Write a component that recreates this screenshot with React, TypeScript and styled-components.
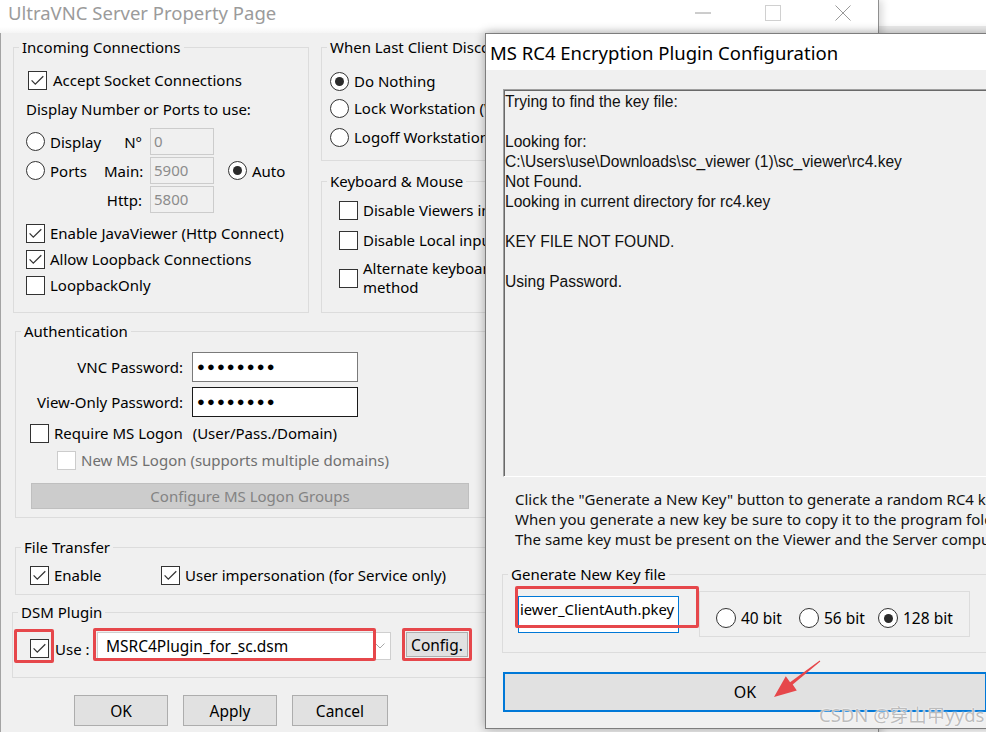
import React from "react";
import styled, { createGlobalStyle } from "styled-components";

const UI = `"Noto Sans", "Open Sans", sans-serif`;
const CLASSIC = `"Liberation Sans", Arial, sans-serif`;

const GlobalStyle = createGlobalStyle`
  html, body { margin: 0; padding: 0; background: #fff; }
  body { font-family: ${UI}; color: #000; }
  *, *::before, *::after { box-sizing: border-box; }
`;

const Desktop = styled.div`
  position: relative;
  width: 986px;
  height: 732px;
  overflow: hidden;
  font-family: ${UI};
  background: linear-gradient(#fff 0 26px, #ececec 26px 33px, #8c8c8c 33px 34px, #fff 34px);
`;

/* ---------- main window ---------- */
const MainWindow = styled.section`
  position: absolute;
  left: 0;
  top: 0;
  width: 879px;
  height: 760px;
  display: flex;
  flex-direction: column;
  background: #f0f0f0;
  border-right: 1px solid #8f8f8f;
  box-shadow: 3px 0 8px rgba(0, 0, 0, 0.16);
`;

const TitleBar = styled.header`
  flex: none;
  height: 33px;
  padding-bottom: 8px;
  display: flex;
  align-items: center;
  background: linear-gradient(#fff 0 27px, #f5f5f5 33px);
`;

const MainTitle = styled.h1`
  margin: 0;
  padding-left: 8px;
  font-size: 18.5px;
  font-weight: 400;
  line-height: 25px;
  color: #9b9b9b;
  white-space: nowrap;
`;

const WindowControls = styled.div`
  margin-left: auto;
  display: flex;
  height: 25px;
`;

const ControlButton = styled.div`
  width: 70px;
  height: 25px;
  display: flex;
  align-items: center;
  justify-content: center;
`;

const MainBody = styled.div`
  flex: 1;
  min-height: 0;
  border-left: 1px solid #a3a3a3;
  padding: 4px 12px 0 12px;
  display: flex;
  flex-direction: column;
`;

const TopRow = styled.div`
  display: flex;
  gap: 12px;
  align-items: flex-start;
`;

const RightColumn = styled.div`
  flex: 1;
  min-width: 0;
  display: flex;
  flex-direction: column;
  gap: 10px;
`;

const Group = styled.fieldset<{ $h: number; $w?: number; $mt?: number; $ml?: number }>`
  margin: ${(p) => p.$mt ?? 0}px 0 0 ${(p) => p.$ml ?? 0}px;
  padding: 0;
  height: ${(p) => p.$h}px;
  ${(p) => (p.$w ? `width: ${p.$w}px; flex: none;` : "")}
  min-width: 0;
  border: 1px solid #dcdcdc;
`;

const Legend = styled.legend`
  margin-left: 5px;
  padding: 0 3px;
  font-size: 15px;
  line-height: 20px;
  white-space: nowrap;
`;

const GroupBody = styled.div<{ $pl: number }>`
  display: flex;
  flex-direction: column;
  align-items: flex-start;
  padding-left: ${(p) => p.$pl}px;
`;

const Row = styled.div<{ $mt?: number; $ml?: number; $gap?: number }>`
  display: flex;
  align-items: center;
  min-height: 20px;
  gap: ${(p) => p.$gap ?? 5}px;
  margin-top: ${(p) => p.$mt ?? 0}px;
  margin-left: ${(p) => p.$ml ?? 0}px;
  font-size: 15px;
  line-height: 20px;
  white-space: nowrap;
`;

const Label = styled.span<{ $dim?: boolean; $w?: number; $mt?: number; $ml?: number }>`
  color: ${(p) => (p.$dim ? "#6f6f6f" : "#000")};
  ${(p) => (p.$w ? `width: ${p.$w}px; flex: none;` : "")}
  margin-top: ${(p) => p.$mt ?? 0}px;
  margin-left: ${(p) => p.$ml ?? 0}px;
  font-size: 15px;
  line-height: 20px;
  white-space: nowrap;
`;

const TwoLine = styled.span`
  font-size: 15px;
  line-height: 19px;
`;

const Box = styled.span<{ $disabled?: boolean }>`
  flex: none;
  width: 19px;
  height: 19px;
  border: 1px solid ${(p) => (p.$disabled ? "#cccccc" : "#333")};
  background: #fff;
  display: inline-flex;
  align-items: center;
  justify-content: center;
`;

const RadioCircle = styled.span<{ $on?: boolean; $size?: number }>`
  flex: none;
  width: ${(p) => p.$size ?? 19}px;
  height: ${(p) => p.$size ?? 19}px;
  border-radius: 50%;
  border: 1px solid #333;
  background: #fff;
  display: inline-flex;
  align-items: center;
  justify-content: center;
  &::after {
    content: "";
    width: 9px;
    height: 9px;
    border-radius: 50%;
    background: #2b2b2b;
    display: ${(p) => (p.$on ? "block" : "none")};
  }
`;

const CheckBox = ({ checked, disabled }: { checked?: boolean; disabled?: boolean }) => (
  <Box $disabled={disabled}>
    {checked && (
      <svg width="17" height="17" viewBox="0 0 17 17">
        <path d="M2.6 8.4 L6.3 12.2 L14.3 4.2" fill="none" stroke="#333" strokeWidth="1.25" />
      </svg>
    )}
  </Box>
);

const PortGrid = styled.div`
  margin-top: 9px;
  display: grid;
  grid-template-columns: 70px 38px 64px auto;
  grid-auto-rows: 27px;
  column-gap: 8px;
  row-gap: 2px;
  align-items: center;
  font-size: 15px;
  line-height: 20px;
`;

const RadioItem = styled.span<{ $ml?: number; $w?: number }>`
  display: flex;
  align-items: center;
  gap: 5px;
  margin-left: ${(p) => p.$ml ?? 0}px;
  ${(p) => (p.$w ? `width: ${p.$w}px; flex: none;` : "")}
  white-space: nowrap;
`;

const GridLabel = styled.span`
  text-align: right;
  white-space: nowrap;
`;

const PortInput = styled.div`
  height: 27px;
  width: 64px;
  border: 1px solid #cccccc;
  background: #f0f0f0;
  color: #8c8c8c;
  padding: 2px 0 0 3px;
  font-size: 15px;
  line-height: 20px;
`;

const PassGrid = styled.div`
  margin-top: 11px;
  display: grid;
  grid-template-columns: 167px 166px;
  grid-auto-rows: 30px;
  column-gap: 9px;
  row-gap: 5px;
  align-items: center;
  font-size: 15px;
  line-height: 20px;
`;

const PassInput = styled.div<{ $focus?: boolean }>`
  height: 30px;
  border: 1px solid ${(p) => (p.$focus ? "#1a1a1a" : "#7a7a7a")};
  background: #fff;
  padding-left: 4px;
  display: flex;
  align-items: center;
  font-family: ${CLASSIC};
  font-size: 13px;
  letter-spacing: 2.1px;
  color: #000;
`;

const WideDisabledButton = styled.div`
  margin: 13px 0 0 15px;
  width: 438px;
  height: 26px;
  background: #cccccc;
  border: 1px solid #bfbfbf;
  color: #838383;
  font-size: 15px;
  display: flex;
  align-items: center;
  justify-content: center;
`;

const WinButton = styled.div<{ $w: number; $h: number; $size?: number }>`
  flex: none;
  width: ${(p) => p.$w}px;
  height: ${(p) => p.$h}px;
  background: #e1e1e1;
  border: 1px solid #adadad;
  font-size: ${(p) => p.$size ?? 15.5}px;
  display: flex;
  align-items: center;
  justify-content: center;
  white-space: nowrap;
`;

const Marked = styled.div<{ $mt?: number; $ml?: number }>`
  position: relative;
  flex: none;
  display: flex;
  margin-top: ${(p) => p.$mt ?? 0}px;
  margin-left: ${(p) => p.$ml ?? 0}px;
`;

const Highlight = styled.span<{ $t: number; $r: number; $b: number; $l: number }>`
  position: absolute;
  top: ${(p) => p.$t}px;
  right: ${(p) => p.$r}px;
  bottom: ${(p) => p.$b}px;
  left: ${(p) => p.$l}px;
  border: 3px solid #e6474b;
  border-radius: 2px;
  pointer-events: none;
`;

const DsmRow = styled.div`
  margin-top: 9px;
  display: flex;
  align-items: flex-start;
  font-size: 15px;
  line-height: 20px;
`;

const Combo = styled.div`
  width: 294px;
  height: 28px;
  border: 1px solid #cfcfcf;
  background: #fff;
  display: flex;
  align-items: center;
  padding: 0 5px 0 8px;
  font-size: 15.5px;
  white-space: nowrap;
`;

const ComboText = styled.span`
  flex: 1;
`;

const ButtonRow = styled.div`
  margin: 17px 0 0 61px;
  display: flex;
  gap: 15px;
`;

/* ---------- dialog ---------- */
const Dialog = styled.section`
  position: absolute;
  left: 485px;
  top: 33px;
  width: 520px;
  height: 696px;
  background: #f0f0f0;
  border: 1px solid #7d7d7d;
  box-shadow: 0 0 10px rgba(0, 0, 0, 0.33);
  display: flex;
  flex-direction: column;
`;

const DialogTitle = styled.header`
  flex: none;
  height: 36px;
  background: #fff;
  padding-left: 4px;
  display: flex;
  align-items: center;
  font-size: 18.5px;
  color: #000;
  white-space: nowrap;
`;

const DialogBody = styled.div`
  padding: 0 17px;
  display: flex;
  flex-direction: column;
`;

const LogBox = styled.div`
  margin-top: 19px;
  height: 388px;
  border: 1px solid;
  border-color: #a0a0a0 #ffffff #ffffff #a0a0a0;
  box-shadow: inset 1px 1px 0 #696969;
  padding: 2px 1px;
  font-family: ${CLASSIC};
  font-size: 15.6px;
  line-height: 20px;
  white-space: pre;
  overflow: hidden;
  color: #111;
`;

const HelpText = styled.p`
  margin: 12px 0 0;
  padding-left: 12px;
  font-size: 15px;
  line-height: 20px;
  white-space: pre;
  color: #111;
`;

const KeyRow = styled.div`
  display: flex;
  align-items: flex-start;
  padding-left: 15px;
  font-size: 15px;
  line-height: 20px;
`;

const KeyInput = styled.div`
  width: 161px;
  height: 37px;
  border: 1px solid #0078d7;
  background: #fff;
  padding: 2px 0 0 1px;
  font-size: 14.8px;
  line-height: 20px;
  white-space: nowrap;
  overflow: hidden;
`;

const BitFrame = styled.div`
  margin: 7px 0 0 20px;
  width: 271px;
  height: 46px;
  border: 1px solid #dcdcdc;
  display: flex;
  align-items: center;
  padding: 8px 0 0 16px;
  font-size: 15.5px;
`;

const BigOk = styled.div`
  margin-top: 19px;
  width: 484px;
  height: 40px;
  border: 2px solid #0078d7;
  background: #e1e1e1;
  display: flex;
  align-items: center;
  justify-content: center;
  font-size: 16px;
`;

const Overlay = styled.svg`
  position: absolute;
  left: 0;
  top: 0;
  pointer-events: none;
`;

const Watermark = styled.div`
  position: absolute;
  left: 819px;
  top: 702px;
  font-family: "Noto Sans", "Noto Sans CJK SC", sans-serif;
  font-size: 18.5px;
  line-height: 26px;
  color: #bcbcbc;
  text-shadow: 0 0 2px #fff, 0 0 1px #fff;
  white-space: nowrap;
  pointer-events: none;
`;

const logText = `Trying to find the key file:

Looking for:
C:\\Users\\use\\Downloads\\sc_viewer (1)\\sc_viewer\\rc4.key
Not Found.
Looking in current directory for rc4.key

KEY FILE NOT FOUND.

Using Password.`;

const helpText = `Click the "Generate a New Key" button to generate a random RC4 key file.
When you generate a new key be sure to copy it to the program folder
The same key must be present on the Viewer and the Server computers.`;

export default function App() {
  return (
    <>
      <GlobalStyle />
      <Desktop>
        <MainWindow>
          <TitleBar>
            <MainTitle>UltraVNC Server Property Page</MainTitle>
            <WindowControls>
              <ControlButton>
                <svg width="16" height="2" viewBox="0 0 16 2">
                  <line x1="0" y1="1" x2="16" y2="1" stroke="#9a9a9a" strokeWidth="1" />
                </svg>
              </ControlButton>
              <ControlButton>
                <svg width="16" height="16" viewBox="0 0 16 16">
                  <rect x="0.5" y="0.5" width="15" height="15" fill="none" stroke="#d0d0d0" strokeWidth="1" />
                </svg>
              </ControlButton>
              <ControlButton>
                <svg width="16" height="16" viewBox="0 0 16 16">
                  <path d="M0.5 0.5 L15.5 15.5 M15.5 0.5 L0.5 15.5" stroke="#999" strokeWidth="1" />
                </svg>
              </ControlButton>
            </WindowControls>
          </TitleBar>

          <MainBody>
            <TopRow>
              <Group $h={276} $w={296}>
                <Legend>Incoming Connections</Legend>
                <GroupBody $pl={12}>
                  <Row $mt={13} $ml={2} $gap={6}>
                    <CheckBox checked />
                    <span>Accept Socket Connections</span>
                  </Row>
                  <Row $mt={9}>Display Number or Ports to use:</Row>
                  <PortGrid>
                    <RadioItem>
                      <RadioCircle />
                      Display
                    </RadioItem>
                    <GridLabel>N°</GridLabel>
                    <PortInput>0</PortInput>
                    <span />
                    <RadioItem>
                      <RadioCircle />
                      Ports
                    </RadioItem>
                    <GridLabel>Main:</GridLabel>
                    <PortInput>5900</PortInput>
                    <RadioItem $ml={6}>
                      <RadioCircle $on />
                      Auto
                    </RadioItem>
                    <span />
                    <GridLabel>Http:</GridLabel>
                    <PortInput>5800</PortInput>
                    <span />
                  </PortGrid>
                  <Row $mt={10}>
                    <CheckBox checked />
                    <span>Enable JavaViewer (Http Connect)</span>
                  </Row>
                  <Row $mt={6}>
                    <CheckBox checked />
                    <span>Allow Loopback Connections</span>
                  </Row>
                  <Row $mt={6}>
                    <CheckBox />
                    <span>LoopbackOnly</span>
                  </Row>
                </GroupBody>
              </Group>

              <RightColumn>
                <Group $h={124}>
                  <Legend>When Last Client Disconnects</Legend>
                  <GroupBody $pl={8}>
                    <Row $mt={14}>
                      <RadioCircle $on />
                      <span>Do Nothing</span>
                    </Row>
                    <Row $mt={7}>
                      <RadioCircle />
                      <span>Lock Workstation (W2K)</span>
                    </Row>
                    <Row $mt={9}>
                      <RadioCircle />
                      <span>Logoff Workstation</span>
                    </Row>
                  </GroupBody>
                </Group>
                <Group $h={142}>
                  <Legend>Keyboard &amp; Mouse</Legend>
                  <GroupBody $pl={17}>
                    <Row $mt={9}>
                      <CheckBox />
                      <span>Disable Viewers inputs</span>
                    </Row>
                    <Row $mt={10}>
                      <CheckBox />
                      <span>Disable Local inputs</span>
                    </Row>
                    <Row $mt={9}>
                      <CheckBox />
                      <TwoLine>
                        Alternate keyboard
                        <br />
                        method
                      </TwoLine>
                    </Row>
                  </GroupBody>
                </Group>
              </RightColumn>
            </TopRow>

            <Group $h={197} $mt={8} $ml={2}>
              <Legend>Authentication</Legend>
              <GroupBody $pl={0}>
                <PassGrid>
                  <GridLabel>VNC Password:</GridLabel>
                  <PassInput>●●●●●●●●</PassInput>
                  <GridLabel>View-Only Password:</GridLabel>
                  <PassInput $focus>●●●●●●●●</PassInput>
                </PassGrid>
                <Row $mt={6} $ml={14}>
                  <CheckBox />
                  <span>Require MS Logon</span>
                  <Label $ml={5}>(User/Pass./Domain)</Label>
                </Row>
                <Row $mt={7} $ml={41}>
                  <CheckBox disabled />
                  <Label $dim>New MS Logon (supports multiple domains)</Label>
                </Row>
                <WideDisabledButton>Configure MS Logon Groups</WideDisabledButton>
              </GroupBody>
            </Group>

            <Group $h={58} $mt={19} $ml={2}>
              <Legend>File Transfer</Legend>
              <GroupBody $pl={14}>
                <Row $mt={8} $gap={0}>
                  <RadioItem $w={131}>
                    <CheckBox checked />
                    Enable
                  </RadioItem>
                  <RadioItem>
                    <CheckBox checked />
                    User impersonation (for Service only)
                  </RadioItem>
                </Row>
              </GroupBody>
            </Group>

            <Group $h={76} $mt={7} $ml={-1}>
              <Legend>DSM Plugin</Legend>
              <GroupBody $pl={17}>
                <DsmRow>
                  <Marked $mt={8}>
                    <CheckBox checked />
                    <Highlight $t={-10} $r={-5} $b={-5} $l={-16} />
                  </Marked>
                  <Label $mt={8} $ml={6} $w={42}>
                    Use :
                  </Label>
                  <Marked $mt={1}>
                    <Combo>
                      <ComboText>MSRC4Plugin_for_sc.dsm</ComboText>
                      <svg width="10" height="6" viewBox="0 0 10 6">
                        <path d="M0.5 0.5 L5 5 L9.5 0.5" fill="none" stroke="#a8a8a8" strokeWidth="1" />
                      </svg>
                    </Combo>
                    <Highlight $t={-4} $r={15} $b={-1} $l={-4} />
                  </Marked>
                  <Marked $mt={1} $ml={15}>
                    <WinButton $w={62} $h={25}>
                      Config.
                    </WinButton>
                    <Highlight $t={-4} $r={-4} $b={-4} $l={-4} />
                  </Marked>
                </DsmRow>
              </GroupBody>
            </Group>

            <ButtonRow>
              <WinButton $w={94} $h={31}>
                OK
              </WinButton>
              <WinButton $w={94} $h={31}>
                Apply
              </WinButton>
              <WinButton $w={96} $h={31}>
                Cancel
              </WinButton>
            </ButtonRow>
          </MainBody>
        </MainWindow>

        <Dialog>
          <DialogTitle>MS RC4 Encryption Plugin Configuration</DialogTitle>
          <DialogBody>
            <LogBox>{logText}</LogBox>
            <HelpText>{helpText}</HelpText>
            <Group $h={89} $mt={15} $ml={-1}>
              <Legend>Generate New Key file</Legend>
              <KeyRow>
                <Marked $mt={12}>
                  <KeyInput>iewer_ClientAuth.pkey</KeyInput>
                  <Highlight $t={-10} $r={-20} $b={5} $l={-3} />
                </Marked>
                <BitFrame>
                  <RadioItem $w={83}>
                    <RadioCircle $size={20} />
                    40 bit
                  </RadioItem>
                  <RadioItem $w={79}>
                    <RadioCircle $size={20} />
                    56 bit
                  </RadioItem>
                  <RadioItem>
                    <RadioCircle $size={20} $on />
                    128 bit
                  </RadioItem>
                </BitFrame>
              </KeyRow>
            </Group>
            <BigOk>OK</BigOk>
          </DialogBody>
        </Dialog>

        <Overlay width="986" height="732" viewBox="0 0 986 732">
          <polygon
            points="820.3,661.4 819.7,660.6 790.1,682.2 785.8,676.3 774,697 796.8,690.5 792.7,684.6"
            fill="#e6474b"
          />
        </Overlay>
        <Watermark>CSDN @穿山甲yyds</Watermark>
      </Desktop>
    </>
  );
}
